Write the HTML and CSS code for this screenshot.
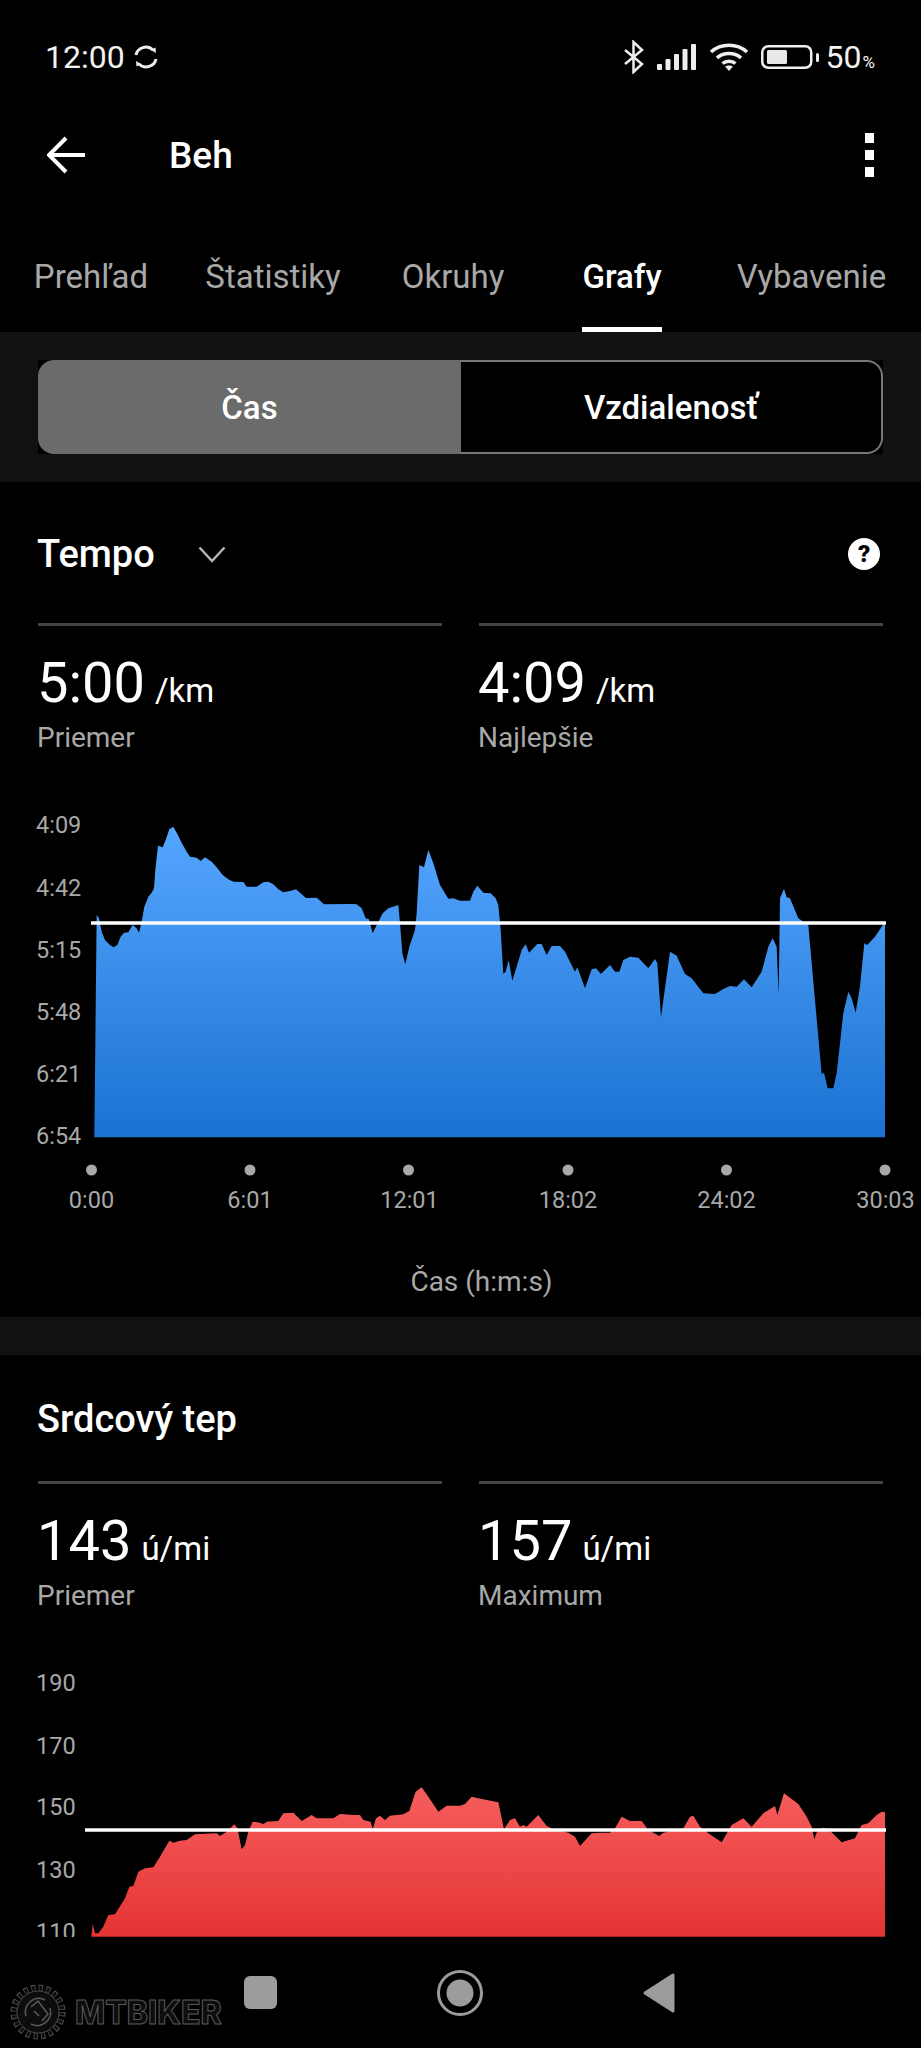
FILE: index.html
```html
<!DOCTYPE html>
<html>

<head>
    <meta charset="utf-8" />
    <meta name="viewport" content="width=device-width, initial-scale=1.0">
    <title>Beh - Grafy</title>
    <link rel="stylesheet" href="styles.css">
</head>

<body>
    <div class="content">
        <div class="status-bar">
            <div class="status-left">
                <span class="clock">12:00</span>
                <svg class="sync-icon" width="26" height="24" viewBox="0 0 26 24">
                    <path d="M3 10A10 9.500 0 0 1 20 5M23 14A10 9.500 0 0 1 6 19" fill="none" stroke="#eee" stroke-width="3" />
                    <path d="M18 5L23 8L22.500 2.500ZM8 19L3 16L3.500 21.500Z" fill="#eee" />
                </svg>
            </div>
            <div class="status-right">
                <svg width="22" height="34" viewBox="0 0 22 34">
                    <path d="M2 10L19 24L10.500 32V2L19 10L2 24" fill="none" stroke="#eee" stroke-width="2.500" />
                </svg>
                <svg class="signal-icon" width="40" height="26" viewBox="0 0 40 26">
                    <rect x="0" y="20" width="5" height="6" rx="1" />
                    <rect x="8.500" y="15" width="5" height="11" rx="1" />
                    <rect x="17" y="10" width="5" height="16" rx="1" />
                    <rect x="25.500" y="5" width="5" height="21" rx="1" />
                    <rect x="34" y="0" width="5" height="26" rx="1" />
                </svg>
                <svg class="wifi-icon" width="40" height="28" viewBox="0 0 40 28">
                    <path d="M2 9C12 0 28 0 38 9M8 15C14 9 26 9 32 15M13.500 20.500C17 17.500 23 17.500 26.500 20.500" fill="none" stroke="#eee" stroke-width="3.600" />
                    <path d="M20 28L16 23.500C18 22 22 22 24 23.500Z" fill="#eee" />
                </svg>
                <svg class="battery-icon" width="59" height="24" viewBox="0 0 59 24">
                    <rect x="1.250" y="1.250" width="49" height="21.500" rx="6" fill="none" stroke="#eee" stroke-width="2.500" />
                    <rect x="6" y="5" width="20" height="14" rx="1.500" fill="#e8e8e8" />
                    <rect x="55" y="8" width="3" height="9" rx="1.500" fill="#eee" />
                </svg>
                <span class="battery-text">50<small>%</small></span>
            </div>
        </div>

        <div class="title-bar">
            <svg class="back-icon" width="40" height="38" viewBox="0 0 40 38">
                <path d="M38 19H3M19 2L2 19L19 36" fill="none" stroke="#fff" stroke-width="4" />
            </svg>
            <span class="page-title">Beh</span>
            <div class="more-menu"><i></i><i></i><i></i></div>
        </div>

        <div class="tabs">
            <div class="tab"><span>Prehľad</span></div>
            <div class="tab"><span>Štatistiky</span></div>
            <div class="tab"><span>Okruhy</span></div>
            <div class="tab active"><span>Grafy</span></div>
            <div class="tab"><span>Vybavenie</span></div>
        </div>

        <div class="band">
            <div class="toggle">
                <div class="toggle-item selected">Čas</div>
                <div class="toggle-item">Vzdialenosť</div>
            </div>
        </div>

        <section class="section section-pace">
            <div class="section-head">
                <div class="section-name">
                    <h2>Tempo</h2>
                    <svg width="28" height="17" viewBox="0 0 28 17">
                        <path d="M1.500 1.500L14 15L26.500 1.500" fill="none" stroke="#b5b5b5" stroke-width="2.500" />
                    </svg>
                </div>
                <div class="help-icon">?</div>
            </div>
            <div class="stats">
                <div class="stat">
                    <div class="stat-value">5:00<span>/km</span></div>
                    <div class="stat-label">Priemer</div>
                </div>
                <div class="stat">
                    <div class="stat-value">4:09<span>/km</span></div>
                    <div class="stat-label">Najlepšie</div>
                </div>
            </div>

            <svg class="chart" width="921" height="430" viewBox="0 0 921 430">
                <defs>
                    <linearGradient id="blueFill" x1="0" y1="0" x2="0" y2="1">
                        <stop offset="0" stop-color="#55a6ff" />
                        <stop offset="1" stop-color="#1b72d1" />
                    </linearGradient>
                    <linearGradient id="redFill" x1="0" y1="0" x2="0" y2="1">
                        <stop offset="0" stop-color="#f65e5e" />
                        <stop offset="1" stop-color="#e53333" />
                    </linearGradient>
                </defs>
                <text class="axis-label" x="36" y="43">4:09</text>
                <text class="axis-label" x="36" y="106">4:42</text>
                <text class="axis-label" x="36" y="168">5:15</text>
                <text class="axis-label" x="36" y="230">5:48</text>
                <text class="axis-label" x="36" y="292">6:21</text>
                <text class="axis-label" x="36" y="354">6:54</text>
                <path transform="scale(0.33333)" fill="url(#blueFill)" d="M283 1042L290 375 297 385 305 425 315 450 330 465 340 472 352 465 362 440 372 428 385 427 398 405 410 415 417 428 425 395 433 350 445 320 455 308 462 295 466 240 474 167 488 172 497 150 508 118 520 110 530 128 545 158 560 185 570 200 590 203 602 213 615 202 635 215 650 232 668 255 685 268 700 275 730 276 740 290 770 290 790 277 805 275 820 283 835 298 850 307 870 303 888 298 900 308 918 324 950 323 972 343 1055 342 1070 343 1085 355 1097 385 1107 388 1118 430 1130 405 1148 370 1165 355 1195 345 1200 400 1207 490 1216 523 1228 470 1245 420 1250 370 1258 225 1272 232 1285 180 1300 220 1320 285 1345 326 1360 325 1380 332 1410 332 1420 305 1432 287 1450 308 1472 310 1487 325 1495 345 1502 420 1510 552 1517 545 1526 510 1537 572 1550 530 1565 480 1577 463 1587 488 1612 462 1625 462 1640 495 1655 468 1680 468 1695 485 1725 545 1732 532 1755 595 1775 538 1788 535 1803 552 1830 525 1845 545 1858 545 1870 510 1890 500 1915 503 1945 535 1965 507 1972 520 1983 682 2010 485 2030 497 2055 552 2075 565 2110 610 2145 612 2170 597 2190 588 2210 590 2232 568 2255 592 2285 545 2305 470 2318 445 2330 470 2336 615 2340 325 2352 296 2360 322 2370 325 2395 385 2425 405 2435 520 2465 852 2472 848 2483 895 2500 895 2510 850 2530 670 2545 605 2555 625 2567 668 2580 590 2593 460 2602 465 2625 440 2655 395 2655 1042Z" />
                <line class="avg-line" x1="91" y1="133" x2="886" y2="133" />
                <g class="axis-dots">
                    <circle cx="91.500" cy="380" r="5.500" />
                    <circle cx="250" cy="380" r="5.500" />
                    <circle cx="408.500" cy="380" r="5.500" />
                    <circle cx="568" cy="380" r="5.500" />
                    <circle cx="726.500" cy="380" r="5.500" />
                    <circle cx="885" cy="380" r="5.500" />
                </g>
                <text class="axis-label mid" x="91.500" y="418">0:00</text>
                <text class="axis-label mid" x="250" y="418">6:01</text>
                <text class="axis-label mid" x="409.500" y="418">12:01</text>
                <text class="axis-label mid" x="568" y="418">18:02</text>
                <text class="axis-label mid" x="726.500" y="418">24:02</text>
                <text class="axis-label mid" x="885.500" y="418">30:03</text>
            </svg>
            <div class="chart-caption">Čas (h:m:s)</div>
        </section>

        <div class="band-thin"></div>

        <section class="section section-heart">
            <div class="section-head">
                <div class="section-name">
                    <h2>Srdcový tep</h2>
                </div>
            </div>
            <div class="stats">
                <div class="stat">
                    <div class="stat-value">143<span>ú/mi</span></div>
                    <div class="stat-label">Priemer</div>
                </div>
                <div class="stat">
                    <div class="stat-value">157<span>ú/mi</span></div>
                    <div class="stat-label">Maximum</div>
                </div>
            </div>

            <svg class="chart" width="921" height="289" viewBox="0 0 921 289">
                <text class="axis-label" x="36" y="43">190</text>
                <text class="axis-label" x="36" y="106">170</text>
                <text class="axis-label" x="36" y="167">150</text>
                <text class="axis-label" x="36" y="230">130</text>
                <text class="axis-label" x="36" y="292">110</text>
                <path transform="scale(0.33333) translate(0 6)" fill="url(#redFill)" d="M274 860L278 822 285 850 295 850 310 830 325 795 345 793 375 745 388 710 400 708 415 665 435 655 460 652 480 620 508 572 520 578 540 572 560 570 585 553 650 550 660 558 680 545 703 523 712 535 725 598 735 585 745 545 758 515 780 518 790 523 800 515 835 513 850 490 880 488 905 513 935 495 950 505 1000 505 1020 492 1060 495 1080 495 1090 510 1112 515 1118 538 1128 505 1140 497 1155 510 1170 497 1210 493 1228 483 1247 425 1265 412 1285 440 1315 485 1340 467 1380 467 1395 462 1415 440 1435 445 1460 450 1495 457 1512 538 1530 510 1545 505 1560 530 1570 525 1580 530 1615 495 1640 528 1660 537 1705 548 1725 560 1740 588 1775 550 1800 548 1830 548 1845 535 1865 500 1890 513 1925 513 1945 540 1978 558 1990 548 2050 535 2070 500 2080 497 2100 530 2125 550 2165 577 2195 525 2230 505 2255 530 2290 490 2325 468 2332 495 2352 430 2395 462 2420 500 2435 530 2443 568 2453 540 2470 533 2485 537 2525 577 2565 565 2585 525 2605 520 2630 495 2645 485 2655 487 2655 860Z" />
                <line class="avg-line" x1="85" y1="182" x2="886" y2="182" />
            </svg>
        </section>
    </div>

    <div class="nav-bar">
        <div class="nav-square"></div>
        <svg width="46" height="46" viewBox="0 0 46 46">
            <circle cx="23" cy="23" r="21.500" fill="none" stroke="#9c9c9c" stroke-width="3" />
            <circle cx="23" cy="23" r="13.500" fill="#9c9c9c" />
        </svg>
        <svg width="32" height="40" viewBox="0 0 32 40">
            <path d="M30 2V38L2 20Z" fill="#9c9c9c" stroke="#9c9c9c" stroke-width="3" stroke-linejoin="round" />
        </svg>

        <div class="watermark">
            <svg width="56" height="56" viewBox="0 0 56 56">
                <circle cx="28" cy="28" r="24" fill="none" stroke="#555" stroke-width="7" stroke-dasharray="4.200 3.340" />
                <circle cx="28" cy="28" r="24" fill="none" stroke="#0d0d0d" stroke-width="5" stroke-dasharray="2.800 4.740" stroke-dashoffset="-0.700" />
                <circle cx="28" cy="28" r="21" fill="#0d0d0d" stroke="#444" stroke-width="1" />
                <path d="M16 32A13.500 13.500 0 0 1 35 16M40 24A13.500 13.500 0 0 1 21 40M21 23L28 17L38 30L32 37M24 27L29 32" fill="none" stroke="#5a5a5a" stroke-width="1.500" />
            </svg>
            <span class="watermark-text">MTBIKER</span>
        </div>
    </div>
</body>

</html>
```

FILE: styles.css
```css
* {
    box-sizing: border-box;
}

html,
body {
    margin: 0;
    padding: 0;
}

body {
    width: 921px;
    height: 2048px;
    overflow: hidden;
    background-color: #000;
    color: #fff;
    font-family: Roboto, "Liberation Sans", sans-serif;
    display: flex;
    flex-direction: column;
}

.content {
    height: 1937px;
    overflow: hidden;
}

/* Status bar */
.status-bar {
    height: 114px;
    padding: 0 46px 0 46px;
    display: flex;
    align-items: center;
    justify-content: space-between;
}

.status-left,
.status-right {
    display: flex;
    align-items: center;
}

.clock {
    font-size: 32px;
    margin-left: -1px;
    color: #f2f2f2;
}

.sync-icon {
    margin-left: 8px;
}

.status-right svg {
    margin-right: 12px;
}

.status-right .battery-icon {
    margin-right: 6px;
}

.battery-text {
    font-size: 32px;
    color: #f2f2f2;
}

.battery-text small {
    font-size: 17px;
    margin-left: 1px;
}

.signal-icon rect {
    fill: #eee;
}

/* Title bar */
.title-bar {
    height: 82px;
    padding: 0 47px;
    display: flex;
    align-items: center;
}

.page-title {
    margin-left: 82px;
    font-size: 37px;
    font-weight: 500;
}

.more-menu {
    margin-left: auto;
    margin-right: 0;
    display: flex;
    flex-direction: column;
    gap: 7px;
}

.more-menu i {
    display: block;
    width: 9px;
    height: 10px;
    background-color: #fff;
}

/* Tabs */
.tabs {
    height: 136px;
    display: grid;
    grid-template-columns: 182px 182px 178px 160px 219px;
    align-items: end;
}

.tab {
    text-align: center;
    font-size: 33px;
    color: #a8a8a8;
}

.tab span {
    display: inline-block;
    line-height: 36px;
    padding-bottom: 37px;
}

.tab.active {
    color: #fff;
    font-weight: 500;
}

.tab.active span {
    padding-bottom: 32px;
    border-bottom: 5px solid #fff;
}

/* Toggle */
.band {
    height: 150px;
    padding: 28px 38px;
    background-color: #111;
}

.band-thin {
    height: 38px;
    background-color: #111;
}

.toggle {
    height: 94px;
    display: grid;
    grid-template-columns: 423px 1fr;
    background-color: #000;
}

.toggle-item {
    display: flex;
    align-items: center;
    justify-content: center;
    font-size: 33px;
    font-weight: 500;
    border: 2px solid #777;
    border-left: none;
    border-radius: 0 16px 16px 0;
}

.toggle-item.selected {
    background-color: #6b6b6b;
    border: none;
    border-radius: 16px 0 0 16px;
}

/* Sections */
.section-pace {
    height: 835px;
    padding-top: 48px;
}

.section-heart {
    padding-top: 40px;
}

.section-head {
    height: 50px;
    padding: 0 38px 2px 37px;
    display: flex;
    align-items: center;
    justify-content: space-between;
}

.section-pace .section-head {
    margin-bottom: 43px;
}

.section-heart .section-head {
    margin-bottom: 36px;
}

.section-name {
    display: flex;
    align-items: center;
    gap: 43px;
}

.section-name h2 {
    margin: 0;
    font-size: 38px;
    font-weight: 500;
    line-height: 48px;
}

.help-icon {
    width: 32px;
    height: 32px;
    margin-right: 3px;
    border-radius: 50%;
    background-color: #fff;
    color: #000;
    font-size: 24px;
    font-weight: 900;
    line-height: 32px;
    text-align: center;
}

.stats {
    padding: 0 38px;
    display: grid;
    grid-template-columns: 404px 404px;
    gap: 37px;
}

.stat {
    border-top: 3px solid #444;
    padding-top: 25px;
}

.stat-value {
    font-size: 56px;
    line-height: 64px;
    margin-left: -1px;
}

.stat-value span {
    margin-left: 10px;
    font-size: 33px;
    line-height: 1;
}

.stat-label {
    margin-top: 8px;
    font-size: 28px;
    line-height: 30px;
    margin-left: -1px;
    color: #a8a8a8;
}

/* Charts */
.chart {
    display: block;
    margin-top: 37px;
}

.axis-label {
    font-size: 23.500px;
    fill: #a8a8a8;
}

.axis-label.mid {
    text-anchor: middle;
}

.axis-dots circle {
    fill: #a8a8a8;
}

.avg-line {
    stroke: #fff;
    stroke-width: 3.5;
}

.chart-caption {
    margin-top: 47px;
    font-size: 28px;
    line-height: 30px;
    text-align: center;
    padding-left: 42px;
    color: #a8a8a8;
}

/* Navigation bar */
.nav-bar {
    position: relative;
    height: 111px;
    display: flex;
    align-items: center;
    justify-content: center;
    gap: 160px;
    padding-right: 2px;
}

.nav-square {
    width: 33px;
    height: 33px;
    border-radius: 6px;
    background-color: #9c9c9c;
}

.watermark {
    position: absolute;
    left: 10px;
    top: 47px;
    display: flex;
    align-items: center;
    gap: 9px;
}

.watermark-text {
    font-family: Inter, Roboto, sans-serif;
    font-size: 32px;
    font-weight: 800;
    letter-spacing: 0;
    color: #0d0d0d;
    -webkit-text-stroke: 1px #5a5a5a;
}
```
